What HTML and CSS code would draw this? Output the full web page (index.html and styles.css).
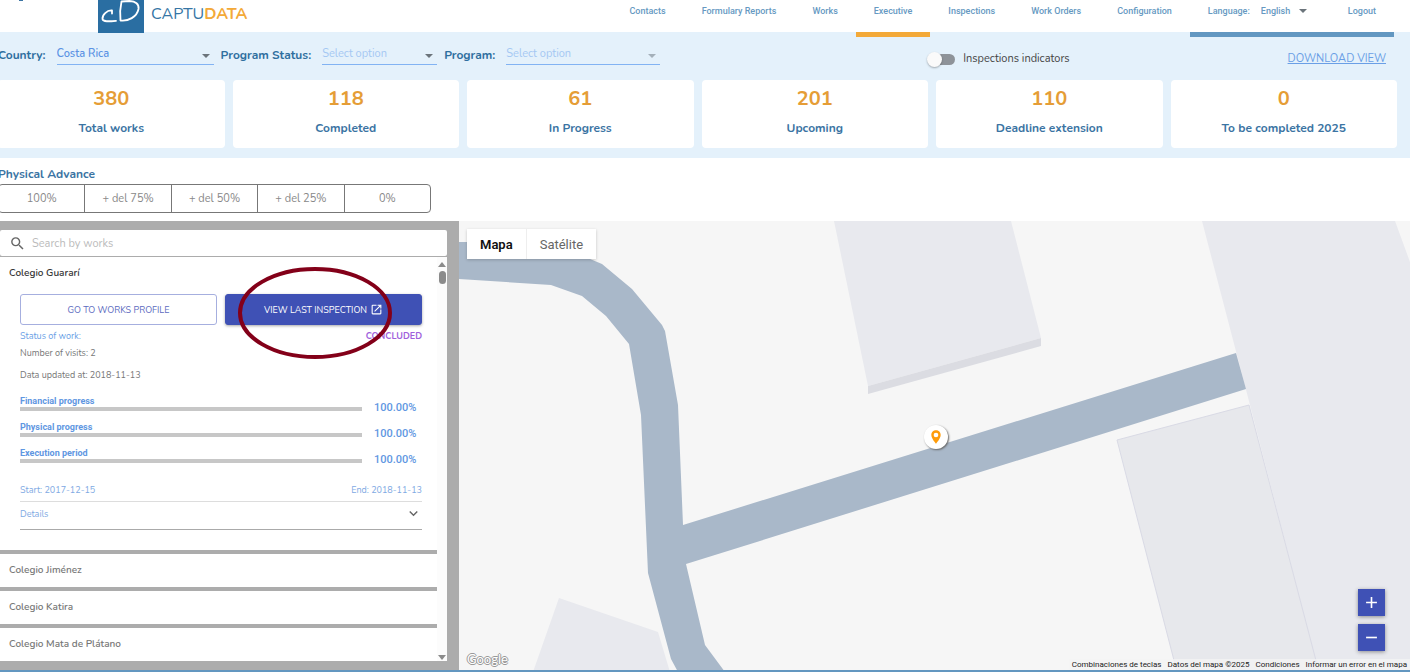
FILE: index.html
```html
<!DOCTYPE html>
<html lang="en">
<head>
<meta charset="UTF-8">
<meta name="viewport" content="width=device-width, initial-scale=1">
<title>Captudata - Executive</title>
<link rel="stylesheet" href="styles.css">
</head>
<body>

<header class="header">
  <a class="brand" href="#">
    <svg class="brand-mark" viewBox="0 0 46 33" aria-hidden="true">
      <rect width="46" height="33" fill="#2a6ea2"/>
      <path d="M14 13.500V10.500C9 10 4 15 4.500 19C5 22 11 21.500 18 20.800" fill="none" stroke="#fff" stroke-width="1.800" stroke-linecap="round" stroke-linejoin="round"/>
      <path d="M23.500 1.500C22 8 21.800 14 22.500 20.500C30 21.500 39 17 40.500 9C41.300 4 37.500 1.200 31.500 1C28.500 1 25.500 1.200 23.500 1.500Z" fill="none" stroke="#fff" stroke-width="1.800" stroke-linejoin="round"/>
    </svg>
    <span class="brand-name">CAPTU<b>DATA</b></span>
  </a>
  <nav class="nav">
    <a href="#">Contacts</a>
    <a href="#">Formulary Reports</a>
    <a href="#">Works</a>
    <a href="#" class="active">Executive</a>
    <a href="#">Inspections</a>
    <a href="#">Work Orders</a>
    <a href="#">Configuration</a>
    <div class="session">
      <label for="language">Language:</label>
      <span class="select language">
        <select id="language"><option>English</option><option>Español</option></select>
      </span>
      <a href="#">Logout</a>
    </div>
  </nav>
</header>

<section class="summary">
  <form class="filters">
    <label for="country">Country:</label>
    <span class="select country">
      <select id="country"><option>Costa Rica</option></select>
    </span>
    <label for="status">Program Status:</label>
    <span class="select status empty">
      <select id="status"><option>Select option</option></select>
    </span>
    <label for="program">Program:</label>
    <span class="select program empty disabled">
      <select id="program"><option>Select option</option></select>
    </span>
    <label class="toggle"><input type="checkbox"> Inspections indicators</label>
    <a class="download" href="#">DOWNLOAD VIEW</a>
  </form>
  <div class="cards">
    <div class="card"><strong>380</strong><span>Total works</span></div>
    <div class="card"><strong>118</strong><span>Completed</span></div>
    <div class="card"><strong>61</strong><span>In Progress</span></div>
    <div class="card"><strong>201</strong><span>Upcoming</span></div>
    <div class="card"><strong>110</strong><span>Deadline extension</span></div>
    <div class="card"><strong>0</strong><span>To be completed 2025</span></div>
  </div>
</section>

<section class="advance">
  <h2>Physical Advance</h2>
  <div class="segments">
    <button type="button">100%</button>
    <button type="button">+ del 75%</button>
    <button type="button">+ del 50%</button>
    <button type="button">+ del 25%</button>
    <button type="button">0%</button>
  </div>
</section>

<main class="workspace">
  <aside class="sidebar">
    <label class="search">
      <svg viewBox="0 0 24 24" aria-hidden="true"><path fill="#666" d="M15.500 14h-.79l-.28-.27A6.471 6.471 0 0 0 16 9.500 6.500 6.500 0 1 0 9.500 16c1.610 0 3.090-.59 4.230-1.570l.27.28v.79l5 4.990L20.490 19l-4.990-5zm-6 0C7.010 14 5 11.990 5 9.500S7.010 5 9.500 5 14 7.010 14 9.500 11.990 14 9.500 14z"/></svg>
      <input type="text" placeholder="Search by works" aria-label="Search by works">
    </label>
    <div class="list">
      <div class="items">
        <article class="work open">
          <h3>Colegio Guararí</h3>
          <div class="work-body">
            <div class="actions">
              <button type="button" class="btn outline">GO TO WORKS PROFILE</button>
              <button type="button" class="btn solid">VIEW LAST INSPECTION
                <svg viewBox="0 0 24 24" aria-hidden="true"><path fill="#fff" d="M19 19H5V5h7V3H5a2 2 0 0 0-2 2v14a2 2 0 0 0 2 2h14c1.100 0 2-.9 2-2v-7h-2v7zM14 3v2h3.590l-9.830 9.830 1.410 1.410L19 6.410V10h2V3h-7z"/></svg>
              </button>
            </div>
            <div class="row state"><span>Status of work:</span><b>CONCLUDED</b></div>
            <p class="visits">Number of visits: 2</p>
            <p class="updated">Data updated at: 2018-11-13</p>
            <div class="progress"><div><span>Financial progress</span><div class="bar"></div></div><b>100.00%</b></div>
            <div class="progress"><div><span>Physical progress</span><div class="bar"></div></div><b>100.00%</b></div>
            <div class="progress"><div><span>Execution period</span><div class="bar"></div></div><b>100.00%</b></div>
            <div class="row dates"><span>Start: 2017-12-15</span><span>End: 2018-11-13</span></div>
            <button type="button" class="details">Details
              <svg viewBox="0 0 24 24" aria-hidden="true"><path fill="#666" d="M7.410 8.590 12 13.170l4.590-4.580L18 10l-6 6-6-6z"/></svg>
            </button>
          </div>
        </article>
        <article class="work"><h3>Colegio Jiménez</h3></article>
        <article class="work"><h3>Colegio Katira</h3></article>
        <article class="work"><h3>Colegio Mata de Plátano</h3></article>
      </div>
      <div class="scrollbar">
        <i class="arrow up"></i>
        <i class="thumb"></i>
        <i class="arrow down"></i>
      </div>
    </div>
    <svg class="highlight" viewBox="0 0 156 94" aria-hidden="true"><ellipse cx="78" cy="47" rx="75" ry="44" fill="none" stroke="#830019" stroke-width="4"/></svg>
  </aside>

  <section class="map">
    <svg class="map-canvas" viewBox="459 221 951 449" preserveAspectRatio="xMinYMin slice" aria-hidden="true">
      <rect x="459" y="221" width="951" height="449" fill="#f6f6f6"/>
      <!-- buildings -->
      <path fill="#e8e9ee" d="M834 221H1011L1041 338 868 386ZM1202 221H1395L1410 262V670H1318L1250 405ZM559 598 658 632 670 672H533Z"/>
      <path fill="#dbdce2" d="M868 386 1041 338V346L868 394Z"/>
      <path fill="#e7e8ec" stroke="#d9dae5" d="M1117 440 1249 405 1319 672H1177Z"/>
      <!-- streets -->
      <path fill="#a9b8c9" d="M459 242H560L590 259 602 264 632 289 662 325 665 331 678 405 683 525 1236 353 1246 389 686 564 705 645 725 672H678L671 659 648 573 641 415 629 344 606 316 582 296 551 285 459 279Z"/>
    </svg>
    <div class="pin">
      <svg viewBox="0 0 24 24" aria-hidden="true"><path fill="#ff9c0a" d="M12 2C8.130 2 5 5.130 5 9c0 5.250 7 13 7 13s7-7.750 7-13c0-3.870-3.130-7-7-7zm0 10.500a3.500 3.500 0 1 1 0-7 3.500 3.500 0 0 1 0 7z"/></svg>
    </div>
    <div class="map-type">
      <button type="button" class="selected">Mapa</button>
      <button type="button">Satélite</button>
    </div>
    <div class="zoom">
      <button type="button" aria-label="Zoom in"><svg viewBox="0 0 12 12"><path d="M6 1v10M1 6h10" stroke="#fff" stroke-width="1.500"/></svg></button>
      <button type="button" aria-label="Zoom out"><svg viewBox="0 0 12 12"><path d="M1 6h10" stroke="#fff" stroke-width="1.500"/></svg></button>
    </div>
    <div class="google">Google</div>
    <footer class="credits">
      <a href="#">Combinaciones de teclas</a>
      <span>Datos del mapa ©2025</span>
      <a href="#">Condiciones</a>
      <a href="#">Informar un error en el mapa</a>
    </footer>
  </section>
</main>

</body>
</html>
```
FILE: styles.css
```css
* {
  box-sizing: border-box;
}

body {
  margin: 0;
  min-height: 100vh;
  display: flex;
  flex-direction: column;
  font-family: "Nunito", "Open Sans", sans-serif;
  font-size: 9px;
  color: #777;
  background: #fff;
  border-bottom: 2px solid #6397c0;
  overflow-x: hidden;
}

h2, h3, p {
  margin: 0;
}

button, select, input {
  font: inherit;
  color: inherit;
}

button {
  cursor: pointer;
}

/* header */
.header {
  position: relative;
  height: 32px;
  display: flex;
  justify-content: space-between;
  align-items: flex-start;
  padding: 0 16px 0 98px;
}

.header::before {
  content: "";
  position: absolute;
  left: 19px;
  top: 0;
  width: 4px;
  height: 1px;
  background: #3b74a3;
}

.brand {
  display: flex;
  gap: 7px;
  text-decoration: none;
  position: relative;
}

.brand-mark {
  width: 46px;
  height: 33px;
}

.brand-name {
  font-size: 16px;
  line-height: 28px;
  color: #3575a5;
}

.brand-name b {
  color: #f3a938;
}

.nav {
  display: flex;
  font-family: Roboto, sans-serif;
  font-size: 9px;
  font-weight: 500;
  line-height: 22px;
  color: #6699c2;
}

.nav a {
  color: inherit;
  text-decoration: none;
  padding: 0 18px;
}

.nav .active,
.session {
  height: 37px;
  border-bottom: 5px solid #f3a938;
  position: relative;
}

.session {
  display: flex;
  gap: 11px;
  padding-left: 18px;
  border-color: #6297c1;
}

/* drop-downs */
.select {
  position: relative;
  display: block;
}

.select select {
  appearance: none;
  width: 100%;
  padding: 0;
  border: 0;
  background: none;
  outline: 0;
}

.select::after {
  content: "";
  position: absolute;
  right: 4px;
  top: 9px;
  border: 4px solid transparent;
  border-top-color: #6b747b;
  border-bottom: 0;
  pointer-events: none;
}

.language {
  width: 48px;
  margin-right: 10px;
}

.language::after {
  right: 2px;
}

/* summary band */
.summary {
  background: #e4f1fb;
  padding-bottom: 10px;
}

.filters {
  height: 48px;
  display: flex;
  align-items: flex-start;
  padding: 13px 24px 0 0;
  margin-left: -2px;
  font-size: 12px;
  font-weight: 700;
  line-height: 20px;
  color: #2f6f9f;
}

.filters .select {
  height: 20px;
  margin: 0 7px 0 11px;
  border-bottom: 1px solid #82b3f3;
  font-size: 11px;
  line-height: 18px;
  color: #5b93e4;
}

.filters .select select {
  display: block;
  height: 18px;
  font-weight: 600;
}

.filters .empty select {
  color: #a5c8f3;
  font-weight: 400;
}

.filters .country { width: 157px; }
.filters .status { width: 115px; }
.filters .program { width: 154px; }

.filters .disabled::after {
  border-top-color: #a4b0ba;
}

.filters .toggle {
  display: flex;
  align-items: center;
  gap: 8px;
  margin-left: auto;
  margin-right: 218px;
  padding-top: 4px;
  font-size: 11px;
  font-weight: 400;
  color: #444;
}

.toggle input {
  appearance: none;
  width: 27px;
  height: 11px;
  margin: 0;
  border-radius: 6px;
  background: #8e9399;
  position: relative;
}

.toggle input::before {
  content: "";
  position: absolute;
  left: -1px;
  top: -2px;
  width: 15px;
  height: 15px;
  border-radius: 50%;
  background: #fafafa;
  box-shadow: 0 1px 2px rgba(0,0,0,0.3);
}

.download {
  padding-top: 4px;
  font-size: 11px;
  font-weight: 400;
  color: #6a9fe6;
}

.cards {
  display: grid;
  grid-template-columns: repeat(6, 1fr);
  gap: 8px;
  margin: 0 13px 0 -2px;
}

.card {
  height: 68px;
  padding-top: 5px;
  display: flex;
  flex-direction: column;
  align-items: center;
  gap: 3px;
  border-radius: 4px;
  background: #fff;
  font-size: 12px;
  font-weight: 700;
  line-height: 24px;
  color: #3b74a3;
}

.card strong {
  font-size: 20px;
  font-weight: 700;
  line-height: 28px;
  color: #e59d36;
}

/* physical advance */
.advance {
  padding: 6px 0 8px;
  margin-left: -2px;
}

.advance h2 {
  font-size: 12px;
  font-weight: 700;
  line-height: 20px;
  color: #3b74a3;
}

.segments {
  display: flex;
  width: 433px;
  height: 29px;
  border: 1px solid #777;
  border-radius: 4px;
}

.segments button {
  flex: 1;
  padding: 0;
  border: 0;
  background: none;
  font-size: 11px;
  color: #888;
}

.segments button + button {
  border-left: 1px solid #777;
}

/* works list */
.workspace {
  flex: 1;
  display: grid;
  grid-template-columns: 459px 1fr;
}

.sidebar {
  position: relative;
  padding: 9px 12px 7px 0;
  background: #acacac;
}

.search {
  display: flex;
  align-items: center;
  gap: 6px;
  height: 26px;
  padding-left: 9px;
  margin-bottom: 1px;
  border-radius: 2px;
  background: #fff;
}

.search svg {
  width: 17px;
  height: 17px;
}

.search input {
  flex: 1;
  padding: 0;
  border: 0;
  outline: 0;
  background: none;
  font-size: 11px;
}

.search input::placeholder {
  color: #bbb;
}

.list {
  display: flex;
}

.items {
  flex: 1;
  display: flex;
  flex-direction: column;
  gap: 4px;
}

.work {
  padding: 0 15px 0 9px;
  background: #fff;
}

.work h3 {
  font-size: 10px;
  font-weight: 600;
  line-height: 33px;
}

.open {
  height: 293px;
}

.open h3 {
  color: #333;
}

.work-body {
  padding-left: 11px;
  line-height: 14px;
}

.actions {
  display: grid;
  grid-template-columns: 1fr 1fr;
  gap: 8px;
  padding-top: 4px;
}

.btn {
  display: flex;
  align-items: center;
  justify-content: center;
  gap: 3px;
  height: 31px;
  padding: 0;
  border: 1px solid #a6afdf;
  border-radius: 3px;
  background: #fff;
  color: #5c6bc0;
}

.btn svg {
  width: 13px;
  height: 13px;
}

.solid {
  border-color: #3f51b5;
  background: #3f51b5;
  color: #fff;
  box-shadow: 0 1px 3px rgba(0,0,0,0.35);
}

.row {
  display: flex;
  justify-content: space-between;
}

.state {
  padding-top: 4px;
  color: #6a9fe6;
}

.state b {
  font-weight: 700;
  color: #a05fdc;
}

.visits {
  padding-top: 3px;
}

.updated {
  padding: 8px 0 13px;
}

.progress {
  display: grid;
  grid-template-columns: 1fr 60px;
  align-items: end;
  height: 26px;
  color: #5f97e2;
  font-family: Roboto, sans-serif;
  line-height: 12px;
  font-weight: 700;
}

.progress > div {
  height: 26px;
}

.progress b {
  padding: 0 0 7px 12px;
  font-size: 11px;
  font-weight: 500;
}

.bar {
  height: 4px;
  background: #c7c7c7;
}

.dates {
  padding: 10px 0 4px;
  border-bottom: 1px solid #ddd;
  color: #7ea9e3;
}

.details {
  display: flex;
  align-items: center;
  justify-content: space-between;
  width: 100%;
  height: 28px;
  padding: 0 0 4px;
  border: 0;
  border-bottom: 1px solid #aaa;
  background: none;
  color: #7ea9e3;
}

.details svg {
  width: 17px;
  height: 17px;
}

.scrollbar {
  display: flex;
  flex-direction: column;
  align-items: center;
  gap: 4px;
  width: 10px;
  padding: 5px 0 1px;
  background: #fcfcfc;
}

.arrow {
  border: 4px solid transparent;
}

.up {
  border-top: 0;
  border-bottom: 5px solid #8b8b8b;
}

.down {
  margin-top: auto;
  border-bottom: 0;
  border-top: 5px solid #8b8b8b;
}

.thumb {
  width: 7px;
  height: 13px;
  border-radius: 4px;
  background: #8b8b8b;
}

/* hand-drawn mark over the inspection button */
.highlight {
  position: absolute;
  left: 237px;
  top: 45px;
  width: 156px;
  height: 94px;
  pointer-events: none;
}

/* map */
.map {
  position: relative;
  overflow: hidden;
  background: #f6f6f6;
  font-family: Roboto, sans-serif;
}

.map-canvas {
  position: absolute;
  width: 100%;
  height: 100%;
}

.pin {
  position: absolute;
  left: 465px;
  top: 204px;
  width: 24px;
  height: 24px;
  padding: 4px;
  border-radius: 50%;
  background: #fff;
  box-shadow: 1px 1px 2px #666;
}

.pin svg {
  display: block;
  width: 16px;
  height: 16px;
}

.map-type {
  position: absolute;
  left: 8px;
  top: 8px;
  display: flex;
  box-shadow: 0 1px 3px rgba(0,0,0,0.2);
}

.map-type button {
  height: 30px;
  padding: 0 13px;
  border: 0;
  background: #fff;
  font-size: 13px;
  color: #666;
}

.map-type .selected {
  font-weight: 600;
  color: #111;
  border-right: 1px solid #eee;
}

.zoom {
  position: absolute;
  right: 25px;
  bottom: 19px;
  display: flex;
  flex-direction: column;
  gap: 8px;
}

.zoom button {
  width: 27px;
  height: 27px;
  padding: 7px;
  border: 0;
  background: #3f51b5;
  box-shadow: 0 1px 4px rgba(0,0,0,0.4);
}

.zoom svg {
  display: block;
  width: 13px;
  height: 13px;
}

.google {
  position: absolute;
  left: 8px;
  bottom: 2px;
  font-family: Lato, sans-serif;
  font-size: 13px;
  line-height: 18px;
  color: #fff;
  text-shadow: 1px 0 #999, -1px 0 #999, 0 1px #999, 0 -1px #999;
}

.credits {
  position: absolute;
  right: 0;
  bottom: 0;
  display: flex;
  gap: 6px;
  padding: 0 3px;
  background: rgba(245,245,245,0.7);
  font-size: 8px;
  line-height: 11px;
  color: #222;
}

.credits a {
  color: inherit;
  text-decoration: none;
}
```
